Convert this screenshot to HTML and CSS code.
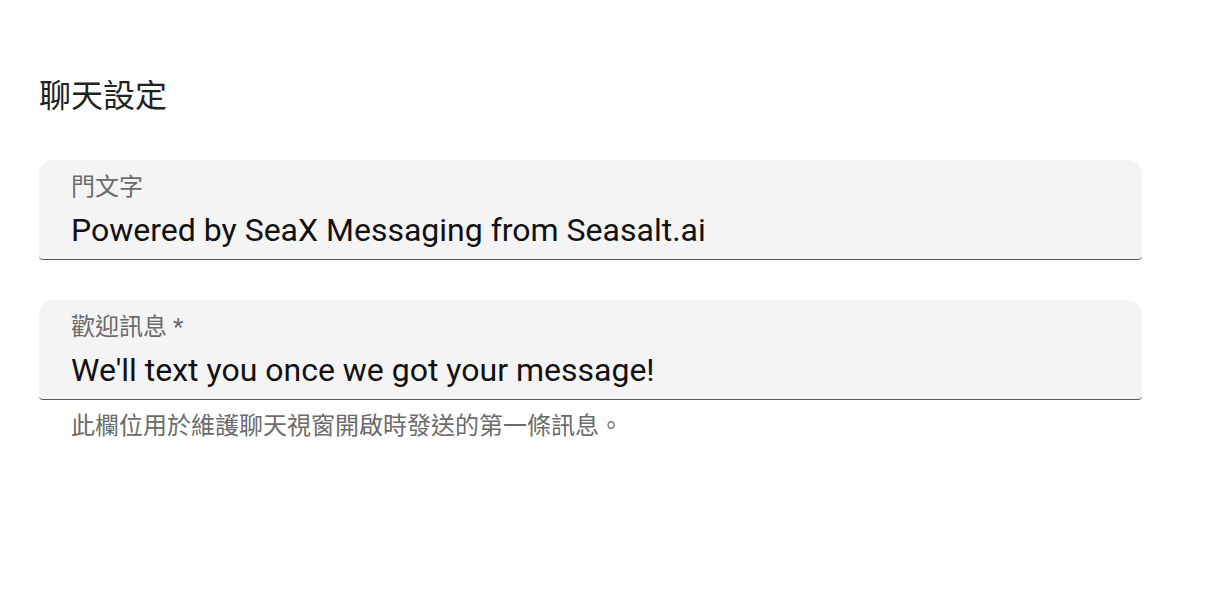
FILE: index.html
```html
<!DOCTYPE html>
<html lang="zh-Hant">
<head>
<meta charset="utf-8">
<link rel="stylesheet" href="styles.css">
</head>
<body>
<div class="page">
  <h2 class="title">聊天設定</h2>
  <div class="field">
    <div class="label">門文字</div>
    <div class="value">Powered by SeaX Messaging from Seasalt.ai</div>
  </div>
  <div class="field second">
    <div class="label">歡迎訊息 *</div>
    <div class="value">We'll text you once we got your message!</div>
  </div>
  <div class="helper">此欄位用於維護聊天視窗開啟時發送的第一條訊息。</div>
</div>
</body>
</html>
```
FILE: styles.css
```css
html, body { margin: 0; padding: 0; background: #fff; }
body { font-family: Roboto, "Noto Sans CJK TC", sans-serif; }
.page { padding: 74px 0 0 39px; width: 1103px; }
.title { margin: 0; font-weight: 400; font-size: 32px; line-height: 44px; color: #212121; }
.field {
  margin-top: 42px;
  height: 100px;
  box-sizing: border-box;
  background: #f4f4f4;
  border-radius: 14px 14px 4px 4px;
  border-bottom: 1.5px solid #5a5a5a;
  padding: 13px 32px 0;
}
.field.second { margin-top: 40px; }
.label { font-size: 24px; line-height: 28px; color: #6b6b6b; }
.value { font-size: 32px; line-height: 40px; color: #111; margin-top: 9px; }
.helper { padding: 11px 0 0 32px; font-size: 24px; line-height: 30px; color: #6b6b6b; }
```
